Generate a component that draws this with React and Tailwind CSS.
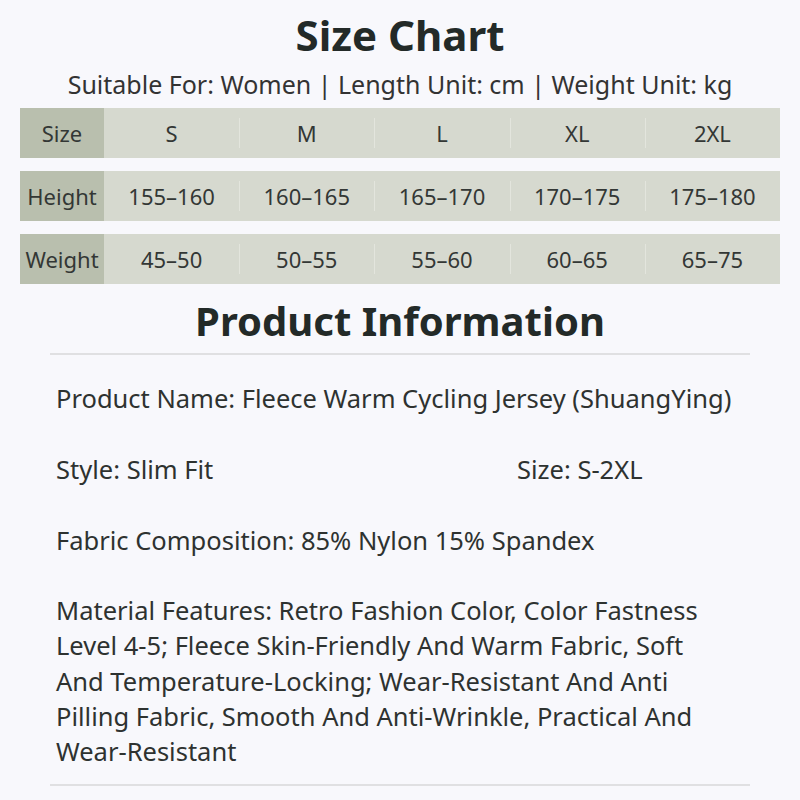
const SIZES = ['S', 'M', 'L', 'XL', '2XL']

const ROWS = [
  { label: 'Size', values: SIZES },
  { label: 'Height', values: ['155–160', '160–165', '165–170', '170–175', '175–180'] },
  { label: 'Weight', values: ['45–50', '50–55', '55–60', '60–65', '65–75'] },
]

function ChartRow({ label, values }) {
  return (
    <div className="flex h-[50px] w-full text-[22px] text-[#333735]">
      <div className="flex w-[84px] shrink-0 items-center justify-center bg-[#b9bfae]">{label}</div>
      <div className="grid flex-1 grid-cols-5 bg-[#d6d9cf]">
        {values.map((value, i) => (
          <div key={value} className="relative flex items-center justify-center">
            {i > 0 ? <span className="absolute left-0 top-[10px] h-[30px] w-px bg-[#e3e5dd]" /> : null}
            {value}
          </div>
        ))}
      </div>
    </div>
  )
}

export default function App() {
  return (
    <div className="h-[800px] w-[800px] overflow-hidden bg-[#f8f8fc] font-['Noto_Sans',sans-serif] text-[#2a2e2d]">
      <h1 className="mt-[11px] text-center text-[42px] font-bold leading-[48px] text-[#232a28]">Size Chart</h1>
      <p className="mt-[9px] text-center text-[25px] leading-[32px] text-[#333]">
        Suitable For: Women | Length Unit: cm | Weight Unit: kg
      </p>

      <div className="mx-[20px] mt-[8px] flex flex-col gap-[13px]">
        {ROWS.map((row) => (
          <ChartRow key={row.label} label={row.label} values={row.values} />
        ))}
      </div>

      <h2 className="mt-[13px] text-center text-[40px] font-bold leading-[48px] text-[#232a28]">Product Information</h2>
      <div className="mx-[50px] mt-[8px] h-[2px] bg-[#e0e0e2]" />

      <div className="px-[56px] text-[25.5px] leading-[36px] text-[#2e3230]">
        <p className="mt-[25px]">Product Name: Fleece Warm Cycling Jersey (ShuangYing)</p>
        <div className="mt-[35px] flex">
          <span className="w-[461px]">Style: Slim Fit</span>
          <span>Size: S-2XL</span>
        </div>
        <p className="mt-[35px]">Fabric Composition: 85% Nylon 15% Spandex</p>
        <p className="mt-[35px] whitespace-nowrap leading-[35.25px]">
          Material Features: Retro Fashion Color, Color Fastness
          <br />
          Level 4-5; Fleece Skin-Friendly And Warm Fabric, Soft
          <br />
          And Temperature-Locking; Wear-Resistant And Anti
          <br />
          Pilling Fabric, Smooth And Anti-Wrinkle, Practical And
          <br />
          Wear-Resistant
        </p>
      </div>
      <div className="mx-[50px] mt-[15px] h-[2px] bg-[#e0e0e2]" />
    </div>
  )
}
